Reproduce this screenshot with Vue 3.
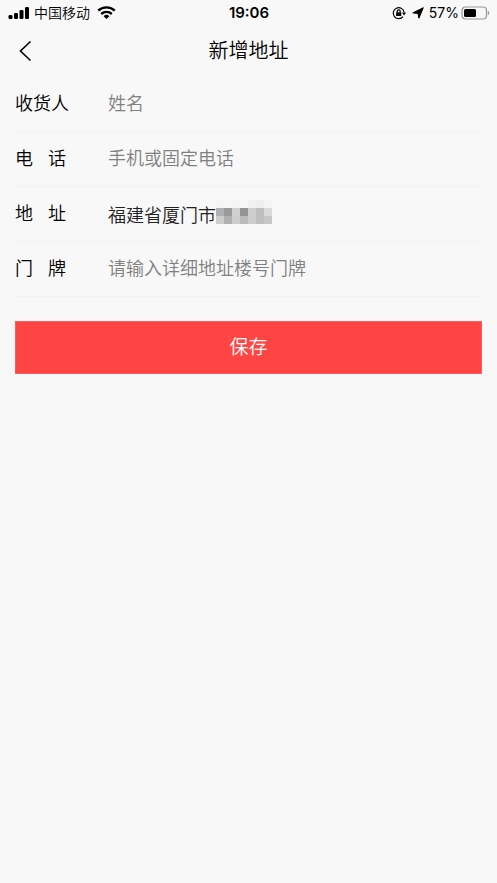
<script setup>
import { ref } from 'vue'

const name = ref('')
const phone = ref('')
const door = ref('')

const mosaic = [
  '#f5f5f5', '#f7f7f7', '#f5f5f5', '#f7f7f7', '#f1f1f1', '#eeeeee', '#f4f4f4',
  '#b0b0b0', '#999999', '#cfcfcf', '#949494', '#cecece', '#bdbdbd', '#dadada',
  '#cccccc', '#b0b0b0', '#cdcdcd', '#bbbbbb', '#cdcdcd', '#bfbfbf', '#c6c6c6',
]
</script>

<template>
  <div class="page">
    <div class="status">
      <div class="side">
        <svg class="signal" width="22" height="14" viewBox="0 0 22 14" aria-hidden="true">
          <rect x="0.5" y="9" width="4" height="4" rx="1.2" />
          <rect x="6" y="7" width="4" height="6" rx="1.2" />
          <rect x="11.5" y="4" width="4" height="9" rx="1.2" />
          <rect x="17" y="1" width="4" height="12" rx="1.2" />
        </svg>
        <span class="carrier">中国移动</span>
        <svg class="wifi" width="19" height="14" viewBox="0 0 19 14" aria-hidden="true">
          <path d="M1.2 4.700a12 12 0 0 1 16.600 0" />
          <path d="M4.200 8a7.800 7.800 0 0 1 10.600 0" />
          <path class="dot" d="M9.500 13 6.600 10.200a4.200 4.200 0 0 1 5.800 0z" />
        </svg>
      </div>
      <time class="clock">19:06</time>
      <div class="side right">
        <svg class="lock" width="14" height="14" viewBox="0 0 14 14" aria-hidden="true">
          <path class="ring" d="M11 10.700a5.500 5.500 0 1 1 1.100-4.700" />
          <path d="M10 6.500h4L12 9.500z" />
          <rect x="4.100" y="6.200" width="5.200" height="3.900" rx=".6" />
          <path class="shackle" d="M5.200 6.500V5.300a1.500 1.500 0 0 1 3 0v1.200" />
        </svg>
        <svg class="arrow" width="12" height="12" viewBox="0 0 12 12" aria-hidden="true">
          <path d="M11.300.7 6.900 11.200 6 6.400.8 5.900z" />
        </svg>
        <span class="percent">57%</span>
        <svg class="battery" width="29" height="14" viewBox="0 0 29 14" aria-hidden="true">
          <rect class="shell" x="1" y="1" width="24.5" height="12" rx="3.5" />
          <rect x="3" y="3" width="12" height="8" rx="1.5" />
          <path class="tip" d="M26.800 4.800c1.900.6 1.900 3.800 0 4.400z" />
        </svg>
      </div>
    </div>

    <header class="bar">
      <button class="back" type="button" aria-label="返回">
        <svg width="14" height="22" viewBox="0 0 14 22" aria-hidden="true">
          <path d="M12.500 1.500 2.500 11l10 9.500" />
        </svg>
      </button>
      <h1>新增地址</h1>
    </header>

    <form @submit.prevent>
      <div class="row">
        <label for="name">收货人</label>
        <input id="name" v-model="name" type="text" placeholder="姓名" />
      </div>
      <div class="row">
        <label for="phone"><span>电</span><span>话</span></label>
        <input id="phone" v-model="phone" type="tel" placeholder="手机或固定电话" />
      </div>
      <div class="row">
        <label for="region"><span>地</span><span>址</span></label>
        <button id="region" class="region" type="button">
          <span>福建省厦门市</span>
          <span class="mosaic">
            <i v-for="(c, i) in mosaic" :key="i" :style="{ background: c }"></i>
          </span>
        </button>
      </div>
      <div class="row">
        <label for="door"><span>门</span><span>牌</span></label>
        <input id="door" v-model="door" type="text" placeholder="请输入详细地址楼号门牌" />
      </div>
      <button class="save" type="submit">保存</button>
    </form>
  </div>
</template>

<style>
body {
  background: #f8f8f8;
}
</style>

<style scoped>
.page {
  color: #000;
  font-family: "Noto Sans CJK SC", sans-serif;
  font-weight: 350;
}
.status {
  display: grid;
  grid-template-columns: 1fr auto 1fr;
  align-items: center;
  height: 26px;
  padding: 0 7px 0 8px;
}
.side {
  display: flex;
  align-items: center;
}
.right {
  justify-content: flex-end;
}
.carrier {
  margin: 0 7px 0 4px;
  padding-bottom: 2px;
  font-size: 14px;
  line-height: 20px;
}
.wifi path {
  fill: none;
  stroke: #000;
  stroke-width: 2.4;
}
.wifi .dot {
  fill: #000;
  stroke: none;
}
.clock {
  font: 600 15px/20px Inter, sans-serif;
}
.lock .ring,
.lock .shackle {
  fill: none;
  stroke: #000;
  stroke-width: 1.2;
}
.arrow {
  margin: 0 5px 0 6px;
}
.arrow path {
  stroke: #000;
  stroke-width: 1;
  stroke-linejoin: round;
}
.percent {
  margin-right: 2px;
  font: 14px/20px Inter, sans-serif;
}
.battery .shell {
  fill: none;
  stroke: #999;
  stroke-width: 1.2;
}
.battery .tip {
  fill: #999;
}
.bar {
  display: grid;
  grid-template-columns: 50px 1fr 50px;
  align-items: center;
  box-sizing: border-box;
  height: 51px;
  padding-bottom: 1px;
}
.back {
  display: flex;
  padding: 0 0 0 18px;
  border: 0;
  background: none;
}
.back path {
  fill: none;
  stroke: #000;
  stroke-width: 1.6;
}
h1 {
  margin: 0;
  padding-bottom: 2px;
  font-size: 20px;
  font-weight: inherit;
  line-height: 28px;
  text-align: center;
}
form {
  padding: 0 15px;
}
.row {
  display: flex;
  align-items: center;
  height: 55px;
  padding-bottom: 4px;
  box-sizing: border-box;
  border-bottom: 1px solid #f2f2f2;
}
label {
  display: flex;
  gap: 15px;
  flex: 0 0 93px;
  font-size: 18px;
  line-height: 26px;
}
input {
  flex: 1;
  min-width: 0;
  height: 40px;
  padding: 0;
  border: 0;
  outline: 0;
  background: none;
  color: #333;
  font: inherit;
  font-size: 18px;
}
input::placeholder {
  color: #808080;
  opacity: 1;
}
.region {
  display: flex;
  flex: 1;
  align-items: center;
  padding: 4px 0 0;
  border: 0;
  background: none;
  color: #222;
  font: inherit;
  font-size: 18px;
  line-height: 26px;
  text-align: left;
}
.mosaic {
  display: grid;
  grid-template-columns: repeat(7, 8px);
  grid-auto-rows: 8px;
  padding-bottom: 4px;
}
.save {
  display: block;
  width: 100%;
  height: 53px;
  margin-top: 24px;
  padding: 0 0 4px;
  border: 1px solid #ff5c5c;
  background: #ff4444;
  color: #fff;
  font: inherit;
  font-size: 19px;
}
</style>
